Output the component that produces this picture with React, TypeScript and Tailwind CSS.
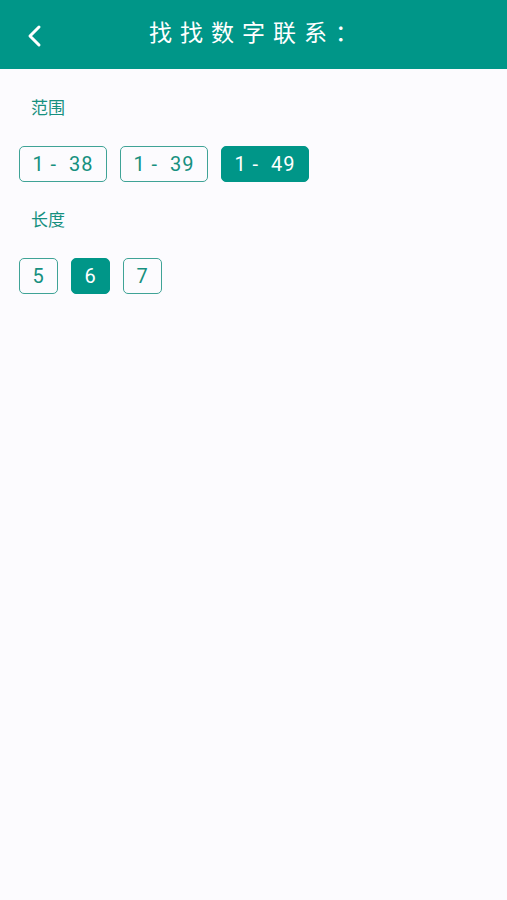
import React from "react";

const font = { fontFamily: 'Roboto, "Noto Sans CJK SC", sans-serif' };

function Chip({ label, active, wide }: { label: string; active?: boolean; wide?: boolean }) {
  return (
    <div
      className={`h-[36px] ${wide ? "w-[88px]" : "w-[39px]"} rounded-[5px] flex items-center justify-center text-[20px] tracking-[1px] whitespace-pre ${
        active ? "bg-[#009688] text-white border-[1.5px] border-[#009688]" : "border-[1.5px] border-[#3fa396] text-[#16907f]"
      }`}
    >
      {label}
    </div>
  );
}

export default function App() {
  return (
    <div className="min-h-[900px] w-full bg-[#fcfbfe]" style={font}>
      <div className="h-[69px] bg-[#009688] relative flex items-center justify-center">
        <svg className="absolute left-[26px] top-[24px]" width="18" height="24" viewBox="0 0 18 24">
          <path d="M13 3 L4 12 L13 21" fill="none" stroke="white" strokeWidth="3" strokeLinecap="round" strokeLinejoin="round" />
        </svg>
        <div className="text-white text-[23px] tracking-[8px] pl-[8px]">找找数字联系：</div>
      </div>
      <div className="px-[19px]">
        <div className="pt-[27px] pl-[12px] text-[17px] text-[#16907f] leading-[24px]">范围</div>
        <div className="mt-[26px] flex gap-[13px]">
          <Chip label="1 -  38" wide />
          <Chip label="1 -  39" wide />
          <Chip label="1 -  49" wide active />
        </div>
        <div className="mt-[26px] pl-[12px] text-[17px] text-[#16907f] leading-[24px]">长度</div>
        <div className="mt-[26px] flex gap-[13px]">
          <Chip label="5" />
          <Chip label="6" active />
          <Chip label="7" />
        </div>
      </div>
    </div>
  );
}
